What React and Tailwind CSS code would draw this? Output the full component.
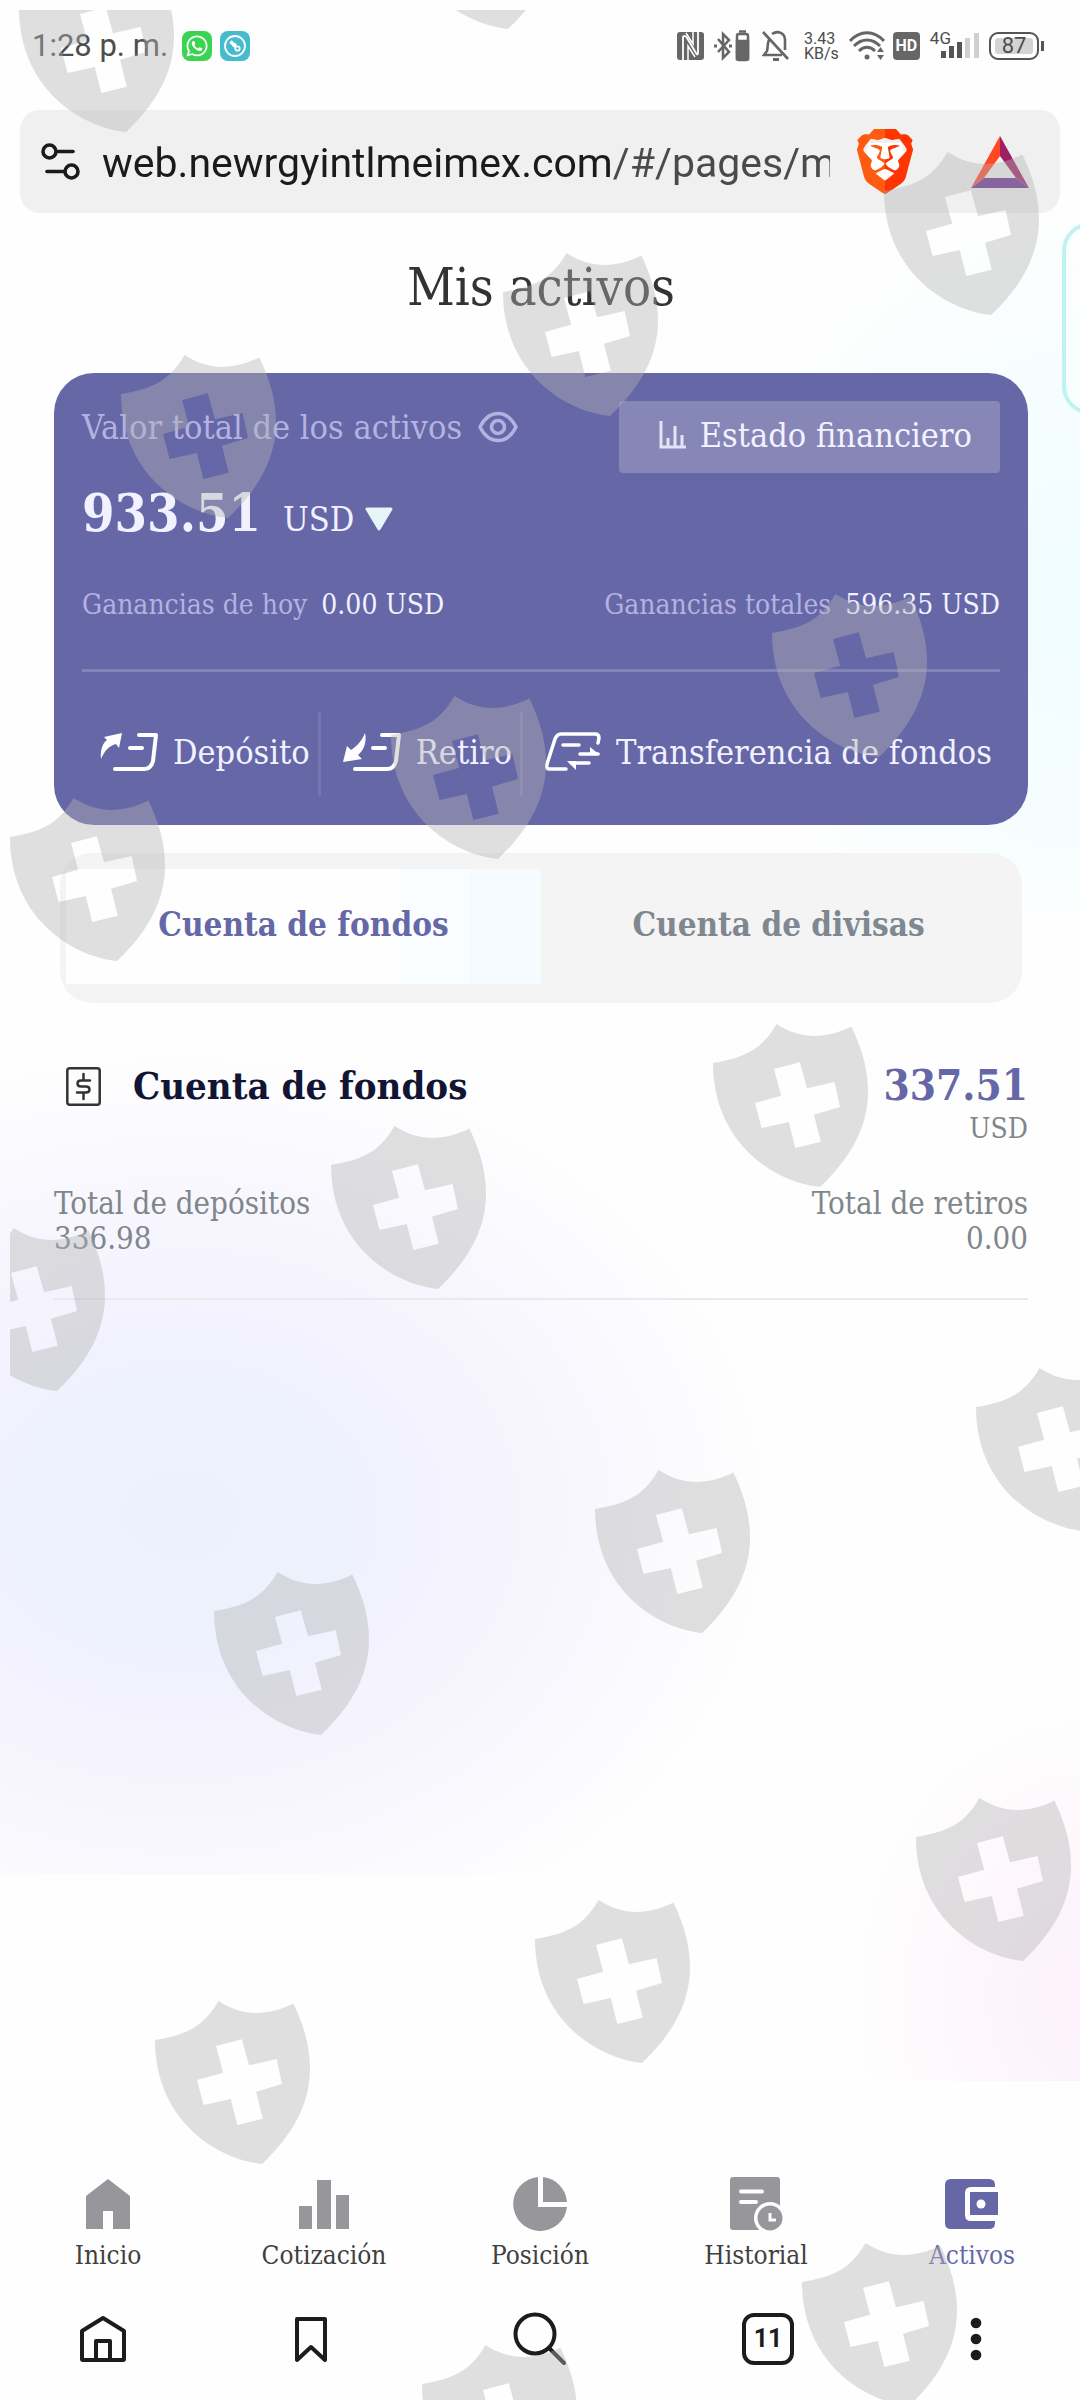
import React, { useState } from 'react';
import { SiBrave } from 'react-icons/si';
import { FaWhatsapp } from 'react-icons/fa';

const SHIELDS = [
  [19, -31], [401, -134], [884, 152], [503, 253], [121, 355],
  [772, 594], [391, 696], [10, 798],
  [713, 1024], [331, 1126], [-50, 1228],
  [976, 1368], [595, 1470], [214, 1572],
  [916, 1798], [535, 1900], [155, 2001],
  [802, 2243], [422, 2345],
];

const NAV = [
  { label: 'Inicio', icon: HomeSolid },
  { label: 'Cotización', icon: BarsSolid },
  { label: 'Posición', icon: PieSolid },
  { label: 'Historial', icon: HistorySolid },
  { label: 'Activos', icon: WalletSolid, active: true },
];

export default function App() {
  const [tab, setTab] = useState('fondos');
  return (
    <div className="relative flex min-h-screen flex-col overflow-hidden bg-[#fefefe] font-['DejaVu_Serif_Condensed','DejaVu_Serif',serif]">
      <Backdrop />
      <StatusBar />
      <AddressBar />
      <main className="relative pl-[54px] pr-[52px]">
        <h1 className="mt-11 text-center text-[52px] leading-[60px] text-[#333]">Mis activos</h1>
        <AssetCard />
        <div className="mx-1.5 mt-7 flex rounded-[32px] bg-[#f4f4f4] px-1.5 pb-[19px] pt-4" role="tablist">
          <Tab active={tab === 'fondos'} onClick={() => setTab('fondos')}>Cuenta de fondos</Tab>
          <Tab active={tab === 'divisas'} onClick={() => setTab('divisas')}>Cuenta de divisas</Tab>
        </div>
        <section className="mt-[57px] border-b-2 border-[#e9e9ee] pb-[42px] text-[#7f868c]">
          <div className="flex items-start justify-between">
            <div className="flex items-center pl-3">
              <MoneyIcon />
              <h2 className="ml-8 text-[38px] font-bold leading-[52px] text-[#111433]">Cuenta de fondos</h2>
            </div>
            <div className="text-right">
              <p className="text-[42px] font-bold leading-[52px] text-[#6667a7]">337.51</p>
              <p className="text-[28px] leading-[34px]">USD</p>
            </div>
          </div>
          <div className="mt-10 flex justify-between text-[31px] leading-[35px]">
            <div>
              <p>Total de depósitos</p>
              <p>336.98</p>
            </div>
            <div className="text-right">
              <p>Total de retiros</p>
              <p>0.00</p>
            </div>
          </div>
        </section>
      </main>
      <nav className="relative mt-auto grid grid-cols-5">
        {NAV.map(({ label, icon: Icon, active }) => (
          <a key={label} href="#" className={active ? 'flex flex-col items-center gap-2 text-[#6667a7]' : 'flex flex-col items-center gap-2 text-[#97979b]'}>
            <Icon />
            <span className={active ? 'text-[26px] leading-9' : 'text-[26px] leading-9 text-[#404040]'}>{label}</span>
          </a>
        ))}
      </nav>
      <BrowserBar />
      <div className="absolute right-[-40px] top-[222px] h-[193px] w-[58px] rounded-[32px] border-4 border-[#bff3f1] bg-white/40"></div>
      <Shields />
    </div>
  );
}

function Backdrop() {
  return (
    <div aria-hidden="true" className="absolute inset-0">
      <div className="absolute inset-x-0 top-0 h-[910px] bg-[radial-gradient(ellipse_360px_400px_at_100%_600px,#f0fcff_0%,#f5fdff_45%,#fefefe_100%)]"></div>
      <div className="absolute inset-x-0 top-[980px] h-[895px] bg-[radial-gradient(ellipse_600px_470px_at_180px_535px,#edf1fd_0%,#eef2fd_28%,#f3f2fe_42%,#f8f7fe_68%,#fefefe_100%)]"></div>
      <div className="absolute right-0 top-[1620px] h-[461px] w-[420px] bg-[radial-gradient(ellipse_230px_290px_at_100%_380px,#fdf1fa_0%,#fdf7fc_50%,transparent_100%)]"></div>
    </div>
  );
}

function Shields() {
  return (
    <svg aria-hidden="true" className="pointer-events-none absolute left-0 top-0" width="1080" height="2400" viewBox="0 0 1080 2400">
      <defs>
        <clipPath id="area"><rect x="10" y="10" width="1070" height="2390" /></clipPath>
      </defs>
      <g clipPath="url(#area)" fill="#b3b3b3" fillOpacity="0.41" fillRule="evenodd">
        {SHIELDS.map(([x, y]) => (
          <path key={`${x}-${y}`} transform={`translate(${x} ${y})`} d="M0 39C30 34 48 27 63.500 0C88 16 113 15 138.400 2.500C149 25 155 45 155 68C155 103 137 135 107 163C60 158 0 118 0 39ZM61 45L68.200 71.700L42 79L48.600 104L75.800 98L82.300 124L107.800 117.700L101 90.700L127 83L121.600 58L94 64.300L86.800 38.300Z" />
        ))}
      </g>
    </svg>
  );
}

function StatusBar() {
  return (
    <header className="relative mb-11 mt-[26px] flex h-10 items-center justify-between pl-8 pr-9 font-[Roboto,sans-serif] text-[#4d4d4d]">
      <div className="flex items-center">
        <span className="text-[31px] leading-10">1:28 p. m.</span>
        <span className="ml-3.5 flex h-[30px] w-[30px] items-center justify-center rounded-lg bg-[#3bd352] text-white"><FaWhatsapp size={24} /></span>
        <span className="ml-2 flex h-[30px] w-[30px] items-center justify-center rounded-lg bg-[#45bccd] text-white">
          <svg width="24" height="24" viewBox="0 0 24 24" fill="none" stroke="currentColor" strokeWidth="1.800">
            <circle cx="12" cy="12" r="10" />
            <path d="M7.500 7.500l5 5" strokeWidth="3.500" />
            <path d="M10 12.500l3-3" />
            <circle cx="14.500" cy="14.500" r="2.200" />
          </svg>
        </span>
      </div>
      <div className="flex items-center">
        <svg width="27" height="28" viewBox="0 0 27 28">
          <rect width="27" height="28" rx="3" fill="#666" />
          <path d="M6 28V5c1-2 3-1 4 1l9 15c1 2 2 2 2 0V0" fill="none" stroke="#fff" strokeWidth="1.800" />
          <path d="M11 28V14l7 11M16 0v12L9 1" fill="none" stroke="#fff" strokeWidth="1.500" />
        </svg>
        <svg className="ml-2.5" width="36" height="32" viewBox="0 0 36 32" fill="none" stroke="#666" strokeWidth="2.500">
          <path d="M4 9l11 13-6 6V4l6 6L4 22" />
          <path d="M0 16h3M15 16h3" strokeWidth="3" />
          <rect x="23" y="4" width="11" height="26" rx="2" />
          <path d="M25 1.500h7" />
          <path d="M23 11h11v18H23z" fill="#666" />
        </svg>
        <svg className="ml-3" width="28" height="32" viewBox="0 0 28 32" fill="none" stroke="#666" strokeWidth="2.600">
          <path d="M1 2l25 27M8 8C5 12 6 18 5 21l-3 4h18M10 4c6-4 13-1 13 6v10" />
          <path d="M11 29.500h6" strokeWidth="3" />
        </svg>
        <span className="ml-3.5 text-[16px] leading-[15px]">3.43<br />KB/s</span>
        <svg className="ml-2.5" width="36" height="30" viewBox="0 0 36 30" fill="none" stroke="#666" strokeWidth="3">
          <path d="M1 10C11-1 25-1 35 10M5 15c8-8 18-8 26 0M10 20c5-5 11-5 16 0" />
          <circle cx="18" cy="26" r="2.500" fill="#666" stroke="none" />
          <path d="M28 21l3.500-5 3.500 5zM28 24l3.500 5 3.500-5z" fill="#666" stroke="none" />
        </svg>
        <span className="ml-2 flex h-7 w-[27px] items-center justify-center rounded bg-[#666] text-[16px] font-bold text-white">HD</span>
        <span className="-mt-4 ml-2.5 text-[17px] leading-5">4G</span>
        <svg className="-ml-2.5" width="38" height="26" viewBox="0 0 38 26" fill="#555">
          <rect x="0" y="18" width="5" height="7" />
          <rect x="8" y="13" width="5" height="12" />
          <rect x="16" y="9" width="5" height="16" />
          <rect x="24" y="5" width="5" height="20" fill="#d0d0d0" />
          <rect x="33" y="0" width="5" height="25" fill="#d0d0d0" />
        </svg>
        <span className="ml-2.5 flex h-7 w-[50px] items-center justify-center rounded-[9px] border-2 border-[#555] bg-[#d4d4d4] text-[22px] leading-6 shadow-[inset_0_0_0_4px_#fff]">87</span>
        <span className="ml-0.5 h-2.5 w-[3px] bg-[#555]"></span>
      </div>
    </header>
  );
}

function AddressBar() {
  return (
    <div className="relative mx-5 flex h-[103px] items-center rounded-[20px] bg-[#f0f0f0] pl-[21px] pr-[31px]">
      <svg className="shrink-0" width="39" height="38" viewBox="0 0 39 38" fill="none" stroke="#1b1b1b" strokeWidth="3.600" strokeLinecap="round">
        <circle cx="8.500" cy="8.500" r="6.500" />
        <path d="M17 8.500h15" />
        <circle cx="30.500" cy="28.500" r="6.500" />
        <path d="M6 28.500h17" />
      </svg>
      <input aria-label="Dirección" className="ml-[22px] min-w-0 flex-1 bg-[linear-gradient(90deg,#1b1b1b_509px,#4a4a4a_509px)] bg-clip-text pt-1 font-[Roboto,sans-serif] text-[41px] text-transparent outline-none" defaultValue="web.newrgyintlmeimex.com/#/pages/main" />
      <button className="ml-[27px] shrink-0" aria-label="Brave Shields">
        <svg width="56" height="66" viewBox="0 0 56 66">
          <defs>
            <linearGradient id="brave">
              <stop offset="50%" stopColor="#ff5a12" />
              <stop offset="50%" stopColor="#ff3400" />
            </linearGradient>
          </defs>
          <path d="M12 14h32l4 14-8 22-12 8-12-8L8 28z" fill="#fff" />
          <SiBrave x="-5" y="-1" size={66} style={{ fill: 'url(#brave)' }} />
        </svg>
      </button>
      <button className="ml-[58px] shrink-0" aria-label="Recompensas">
        <svg width="58" height="52" viewBox="0 0 58 52">
          <path d="M29 0v20L13 42 0 52z" fill="#ff4724" />
          <path d="M29 0v20l16 22 13 10z" fill="#9e1f63" />
          <path d="M0 52l13-10h32l13 10z" fill="#662d91" />
        </svg>
      </button>
    </div>
  );
}

function AssetCard() {
  return (
    <section className="mt-14 rounded-[40px] bg-[#6667a7] px-7 pb-[29px] pt-7 text-[#f2f1ff]">
      <div className="flex items-start justify-between">
        <div className="mt-1.5 flex items-center text-[#b3b2e0]">
          <span className="text-[34px] leading-10">Valor total de los activos</span>
          <button className="ml-4" aria-label="Ocultar valor">
            <svg width="40" height="32" viewBox="0 0 40 32" fill="none" stroke="currentColor" strokeWidth="3.500">
              <path d="M2 16C11-2 29-2 38 16C29 34 11 34 2 16Z" />
              <circle cx="20" cy="16" r="6.500" />
            </svg>
          </button>
        </div>
        <button className="flex h-[72px] items-center rounded bg-[#8686b7] pb-1 pl-10 pr-7">
          <svg width="27" height="28" viewBox="0 0 27 28" fill="none" stroke="#e4e4f6" strokeWidth="3">
            <path d="M2 0v26h25" />
            <path d="M9 17v8M16 5v20M23 14v11" />
          </svg>
          <span className="ml-3.5 text-[34px] leading-10">Estado financiero</span>
        </button>
      </div>
      <div className="mt-2.5 flex items-baseline">
        <span className="text-[52px] font-bold leading-[60px]">933.51</span>
        <button className="ml-[22px] flex items-center text-[34px] leading-10">
          USD
          <svg className="ml-2.5" width="30" height="25" viewBox="0 0 30 25">
            <path d="M3 2h24L15 22z" fill="#e6f6f6" stroke="#e6f6f6" strokeWidth="3" strokeLinejoin="round" />
          </svg>
        </button>
      </div>
      <div className="mt-11 flex justify-between text-[28px] leading-9">
        <p><span className="mr-3.5 text-[#b3b2e0]">Ganancias de hoy</span>0.00 USD</p>
        <p><span className="mr-3.5 text-[#b3b2e0]">Ganancias totales</span>596.35 USD</p>
      </div>
      <div className="mt-[46px] h-[3px] bg-[#8384b8]"></div>
      <div className="mt-10 flex h-[84px] text-[34px]">
        <button className="flex items-center gap-[15px] border-r-[3px] border-[#7576b0] pb-1 pl-[18px] pr-2">
          <DepositIcon />Depósito
        </button>
        <button className="flex items-center gap-[15px] border-r-[3px] border-[#7576b0] pb-1 pl-[22px] pr-2">
          <WithdrawIcon />Retiro
        </button>
        <button className="flex items-center gap-[15px] whitespace-nowrap pb-1 pl-[22px]">
          <TransferIcon />Transferencia de fondos
        </button>
      </div>
    </section>
  );
}

function Tab({ active, onClick, children }) {
  return (
    <button
      role="tab"
      aria-selected={active}
      onClick={onClick}
      className={
        active
          ? 'h-[115px] flex-1 bg-[linear-gradient(90deg,#fefefe_70%,#f9fdff_70%,#f9fdff_85%,#f5fbff_85%)] pb-1 text-[33px] font-bold text-[#6667a7]'
          : 'h-[115px] flex-1 pb-1 text-[33px] font-bold text-[#7f8890]'
      }
    >
      {children}
    </button>
  );
}

function BrowserBar() {
  return (
    <footer className="relative grid grid-cols-[206fr_210fr_248fr_208fr_208fr] place-items-center pb-[34px] pt-[39px] text-[#1c1c1c]">
      <button aria-label="Página principal">
        <svg width="46" height="50" viewBox="0 0 46 50" fill="none" stroke="currentColor" strokeWidth="4" strokeLinejoin="round">
          <path d="M2 17L23 4l21 13v28q0 1-1 1H3q-1 0-1-1z" />
          <path d="M16 46V27h14v19" />
        </svg>
      </button>
      <button aria-label="Marcadores">
        <svg width="34" height="50" viewBox="0 0 34 50" fill="none" stroke="currentColor" strokeWidth="4" strokeLinejoin="round">
          <path d="M3 5h28v41L17 33 3 46z" />
        </svg>
      </button>
      <button aria-label="Buscar">
        <svg width="54" height="54" viewBox="0 0 54 54" fill="none" stroke="currentColor" strokeWidth="4" strokeLinecap="round">
          <circle cx="22" cy="22" r="19.500" />
          <path d="M37 37l14 14" />
        </svg>
      </button>
      <button className="flex h-[52px] w-[52px] items-center justify-center rounded-xl border-4 border-current font-[Roboto,sans-serif] text-[25px] font-bold">11</button>
      <button aria-label="Menú">
        <svg width="26" height="50" viewBox="0 0 26 50" fill="currentColor">
          <circle cx="13" cy="9" r="5.300" />
          <circle cx="13" cy="25" r="5.300" />
          <circle cx="13" cy="41" r="5.300" />
        </svg>
      </button>
    </footer>
  );
}

function DepositIcon() {
  return (
    <svg className="shrink-0" width="58" height="40" viewBox="0 0 58 40" fill="none" stroke="#fff" strokeWidth="4" strokeLinecap="round" strokeLinejoin="round">
      <path d="M39 3h17l-3 26q-2 8-9 8H15" />
      <path d="M30 16h12" />
      <path d="M1 27C0 17 3 11 7 8L4 5 22 1 19 16 16 12C9 14 5 18 1 27Z" fill="#fff" stroke="none" />
    </svg>
  );
}

function WithdrawIcon() {
  return (
    <svg className="shrink-0" width="58" height="40" viewBox="0 0 58 40" fill="none" stroke="#fff" strokeWidth="4" strokeLinecap="round" strokeLinejoin="round">
      <path d="M39 3h17l-3 26q-2 8-9 8H12" />
      <path d="M30 16h12" />
      <path d="M22 1C24 10 21 18 15 23L19 27 0 30 4 14 8 18C14 14 19 9 22 1Z" fill="#fff" stroke="none" />
    </svg>
  );
}

function TransferIcon() {
  return (
    <svg className="shrink-0" width="56" height="40" viewBox="0 0 56 40" fill="none" stroke="#fff" strokeWidth="3.500" strokeLinecap="round" strokeLinejoin="round">
      <path d="M21 37H4Q1 37 2 32L10 7Q12 2 16 2H50Q54 2 54 6L53 11" />
      <path d="M18 13h16M35 22h18M26 31h18" />
      <path d="M45 15l10 8H45zM22 29h9v9z" fill="#fff" stroke="none" />
    </svg>
  );
}

function MoneyIcon() {
  return (
    <svg width="35" height="39" viewBox="0 0 35 39" fill="none" stroke="#333" strokeWidth="2.500">
      <rect x="1.300" y="1.300" width="32.400" height="36.400" rx="2.500" />
      <path d="M17.500 7v6M17.500 26v6M24 13.500H15Q11.500 13.500 11.500 16.500 11.500 19.500 15 19.500H20Q23.500 19.500 23.500 22.500 23.500 25.500 20 25.500H11" strokeLinecap="round" />
    </svg>
  );
}

function HomeSolid() {
  return (
    <svg width="50" height="50" viewBox="0 0 50 50" fill="currentColor">
      <path d="M25 0l22 17v33H30V32H20v18H3V17z" />
    </svg>
  );
}

function BarsSolid() {
  return (
    <svg width="52" height="50" viewBox="0 0 52 50" fill="currentColor">
      <rect x="1" y="27" width="13" height="23" />
      <rect x="19" y="1" width="14" height="49" />
      <rect x="38" y="16" width="13" height="34" />
    </svg>
  );
}

function PieSolid() {
  return (
    <svg className="-my-0.5" width="54" height="54" viewBox="0 0 54 54" fill="currentColor">
      <path d="M25 0v30h29A27 27 0 1 1 25 0z" />
      <path d="M30 0a27 27 0 0 1 24 25H30z" />
    </svg>
  );
}

function HistorySolid() {
  return (
    <svg className="-my-0.5" width="54" height="54" viewBox="0 0 54 54" fill="currentColor">
      <rect x="1" y="0" width="50" height="53" rx="3" />
      <path d="M12 14.500h21M12 25h15" stroke="#fefefe" strokeWidth="4" strokeLinecap="round" />
      <circle cx="41" cy="41" r="16" fill="#fefefe" />
      <circle cx="41" cy="41" r="12.500" />
      <path d="M41 36v7h6" fill="none" stroke="#fefefe" strokeWidth="3" />
    </svg>
  );
}

function WalletSolid() {
  return (
    <svg width="54" height="50" viewBox="0 0 54 50" fill="currentColor">
      <path d="M6 0H44Q50 0 50 6V8H26Q20 8 20 14V36Q20 42 26 42H50V44Q50 50 44 50H6Q0 50 0 44V6Q0 0 6 0z" />
      <rect x="25" y="13" width="28" height="23" />
      <circle cx="36" cy="25" r="4.500" fill="#fefefe" />
    </svg>
  );
}
